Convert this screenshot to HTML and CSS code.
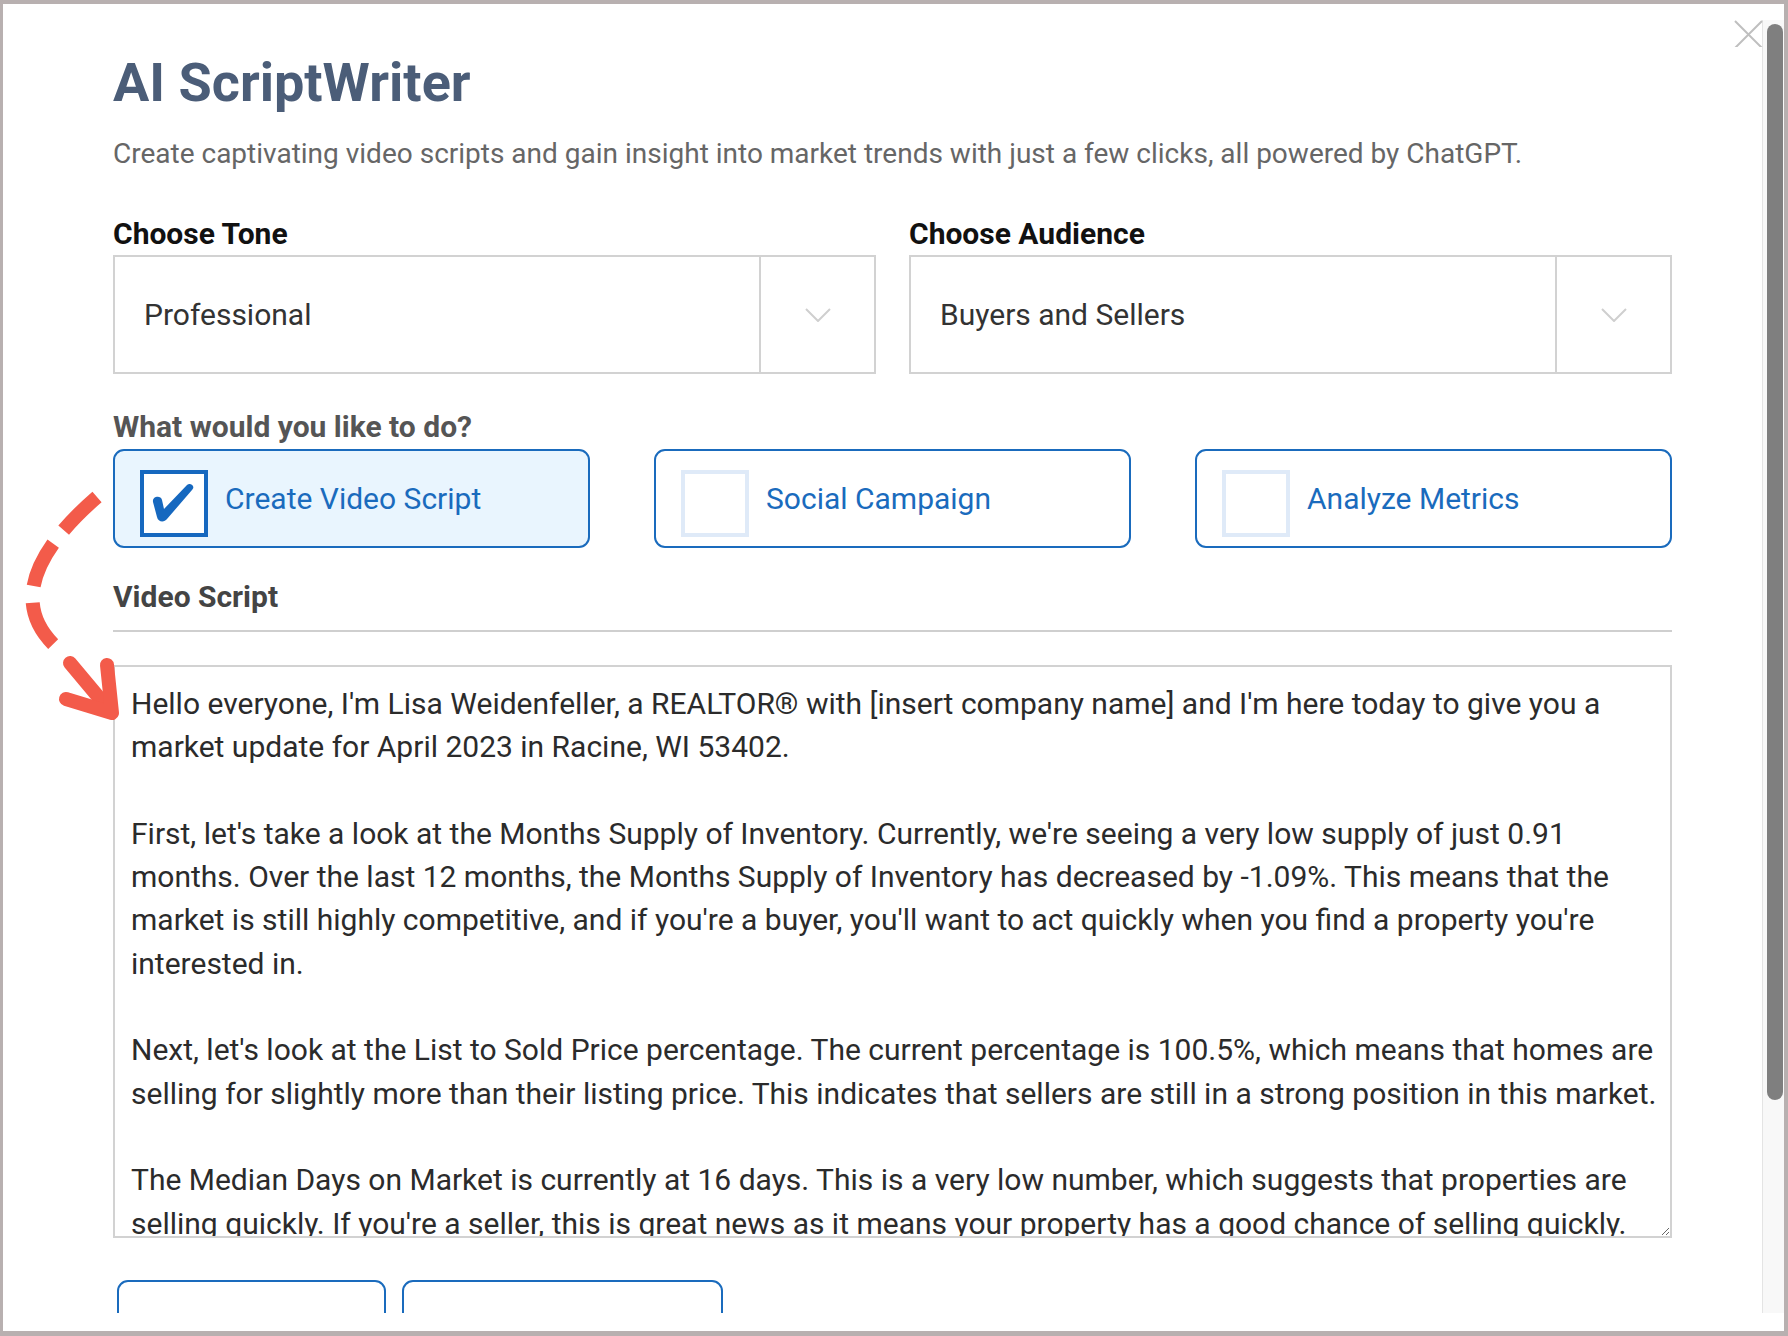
FILE: index.html
```html
<!DOCTYPE html>
<html>

<head>
    <title>AI ScriptWriter</title>
    <link rel="stylesheet" href="styles.css">
</head>

<body>
    <div class="modal">
        <button class="close-btn" aria-label="Close">
            <svg width="30" height="30" viewBox="0 0 30 30">
                <path d="M2 4 L29 31 M29 4 L2 31" stroke="#bfbfbf" stroke-width="2" fill="none"/>
            </svg>
        </button>

        <div class="scroller">
            <div class="content">
                <h1 class="title">AI ScriptWriter</h1>
                <p class="subtitle">Create captivating video scripts and gain insight into market trends with just a few clicks, all powered by ChatGPT.</p>

                <div class="choose-row">
                    <div class="field">
                        <label class="field-label">Choose Tone</label>
                        <div class="select">
                            <span class="select-value">Professional</span>
                            <span class="select-arrow">
                                <svg width="26" height="14" viewBox="0 0 26 14"><polyline points="1,1 13,13 25,1" fill="none" stroke="#cfcfcf" stroke-width="2"/></svg>
                            </span>
                        </div>
                    </div>
                    <div class="field">
                        <label class="field-label">Choose Audience</label>
                        <div class="select">
                            <span class="select-value">Buyers and Sellers</span>
                            <span class="select-arrow">
                                <svg width="26" height="14" viewBox="0 0 26 14"><polyline points="1,1 13,13 25,1" fill="none" stroke="#cfcfcf" stroke-width="2"/></svg>
                            </span>
                        </div>
                    </div>
                </div>

                <h3 class="task-label">What would you like to do?</h3>
                <div class="options">
                    <div class="option selected">
                        <span class="checkbox">
                            <svg width="59" height="59" viewBox="0 0 59 59">
                                <path d="M9 28 C8 22 17 21 18 26 L20 35 L43 11 C46 8 52 12 48 16 L23 45 C20 49 14 48 13 43 Z" fill="#1668bf"/>
                            </svg>
                        </span>
                        <span class="option-text">Create Video Script</span>
                    </div>
                    <div class="option">
                        <span class="checkbox"></span>
                        <span class="option-text">Social Campaign</span>
                    </div>
                    <div class="option">
                        <span class="checkbox"></span>
                        <span class="option-text">Analyze Metrics</span>
                    </div>
                </div>

                <h3 class="section-label">Video Script</h3>
                <hr class="divider">

                <textarea class="script-box">Hello everyone, I'm Lisa Weidenfeller, a REALTOR® with [insert company name] and I'm here today to give you a market update for April 2023 in Racine, WI 53402.

First, let's take a look at the Months Supply of Inventory. Currently, we're seeing a very low supply of just 0.91 months. Over the last 12 months, the Months Supply of Inventory has decreased by -1.09%. This means that the market is still highly competitive, and if you're a buyer, you'll want to act quickly when you find a property you're interested in.

Next, let's look at the List to Sold Price percentage. The current percentage is 100.5%, which means that homes are selling for slightly more than their listing price. This indicates that sellers are still in a strong position in this market.

The Median Days on Market is currently at 16 days. This is a very low number, which suggests that properties are selling quickly. If you're a seller, this is great news as it means your property has a good chance of selling quickly.

Finally, let's look at the number of homes sold.</textarea>

                <div class="actions">
                    <button class="action-btn first"></button>
                    <button class="action-btn second"></button>
                </div>
            </div>

            <div class="scrollbar">
                <div class="thumb"></div>
            </div>
        </div>

        <svg class="pointer-arrow" width="140" height="740" viewBox="0 0 140 740">
            <path d="M97 497 C30 555 10 610 62 652" fill="none" stroke="#f35b4a" stroke-width="14" stroke-dasharray="47 17" stroke-linecap="butt"/>
            <path d="M70 663 L111 712" fill="none" stroke="#f35b4a" stroke-width="14" stroke-linecap="round"/>
            <path d="M66 699 L112 713 L107 665" fill="none" stroke="#f35b4a" stroke-width="14" stroke-linecap="round" stroke-linejoin="round"/>
        </svg>
    </div>
</body>

</html>
```

FILE: styles.css
```css
* {
    box-sizing: border-box;
}

body {
    margin: 0;
    background: #b8b0b0;
    font-family: 'Roboto', 'Liberation Sans', sans-serif;
}

.modal {
    position: relative;
    margin: 4px 4px 5px 3px;
    height: 1327px;
    padding: 16px 0 18px;
    background: #fff;
    overflow: hidden;
}

.close-btn {
    position: absolute;
    top: 13px;
    right: 21px;
    padding: 0;
    border: none;
    background: none;
    width: 30px;
    height: 30px;
    z-index: 2;
}

.scroller {
    display: flex;
    height: 1293px;
}

.content {
    flex: 1;
    overflow: hidden;
    padding: 31px 90px 0 110px;
}

.scrollbar {
    width: 22px;
    padding: 4px 1px 0 4px;
    background: #f8f8f8;
    border-left: 1px solid #e4e4e4;
}

.thumb {
    height: 1076px;
    background: #7f7f7f;
    border-radius: 8px;
}

.title {
    margin: 0;
    font-size: 54px;
    line-height: 64px;
    font-weight: 700;
    color: #4b5d78;
}

.subtitle {
    margin: 21px 0 0;
    font-size: 28px;
    line-height: 36px;
    color: #666;
}

.choose-row {
    display: grid;
    grid-template-columns: 1fr 1fr;
    gap: 33px;
    margin-top: 44px;
}

.field-label {
    display: block;
    font-size: 30px;
    line-height: 36px;
    font-weight: 700;
    color: #111;
}

.select {
    display: flex;
    margin-top: 3px;
    height: 119px;
    border: 2px solid #d2d2d2;
}

.select-value {
    flex: 1;
    display: flex;
    align-items: center;
    padding-left: 29px;
    font-size: 30px;
    color: #333;
}

.select-arrow {
    width: 115px;
    display: flex;
    align-items: center;
    justify-content: center;
    border-left: 2px solid #d2d2d2;
}

.task-label,
.section-label {
    margin: 35px 0 0;
    font-size: 30px;
    line-height: 36px;
    font-weight: 700;
    color: #555;
}

.options {
    display: grid;
    grid-template-columns: repeat(3, 1fr);
    gap: 64px;
    margin-top: 4px;
}

.option {
    display: flex;
    align-items: center;
    height: 99px;
    padding-left: 25px;
    border: 2px solid #1a6bbd;
    border-radius: 11px;
    background: #fff;
}

.option.selected {
    background: #e9f5fe;
}

.checkbox {
    width: 68px;
    height: 67px;
    margin-top: 9px;
    border: 4px solid #dfeaf8;
    background: #fff;
    flex-shrink: 0;
}

.option.selected .checkbox {
    border-color: #1668bf;
}

.checkbox svg {
    display: block;
}

.option-text {
    margin-left: 17px;
    font-size: 30px;
    color: #1a6bbd;
}

.section-label {
    margin-top: 31px;
    color: #444;
}

.divider {
    margin: 15px 0 0;
    border: none;
    height: 2px;
    background: #cfcfcf;
}

.script-box {
    display: block;
    width: 100%;
    height: 573px;
    margin-top: 33px;
    padding: 15px 12px 16px 16px;
    border: 2px solid #d2d2d2;
    font-family: 'Roboto', 'Liberation Sans', sans-serif;
    font-size: 30px;
    line-height: 43.3px;
    color: #2b2b2b;
    overflow: hidden;
    resize: vertical;
}

.actions {
    display: flex;
    gap: 16px;
    margin-top: 42px;
    padding-left: 4px;
}

.action-btn {
    height: 70px;
    border: 2px solid #1a6bbd;
    border-radius: 11px;
    background: #fff;
}

.action-btn.first {
    width: 269px;
}

.action-btn.second {
    width: 321px;
}

.pointer-arrow {
    position: absolute;
    left: -3px;
    top: -4px;
    z-index: 3;
}
```
